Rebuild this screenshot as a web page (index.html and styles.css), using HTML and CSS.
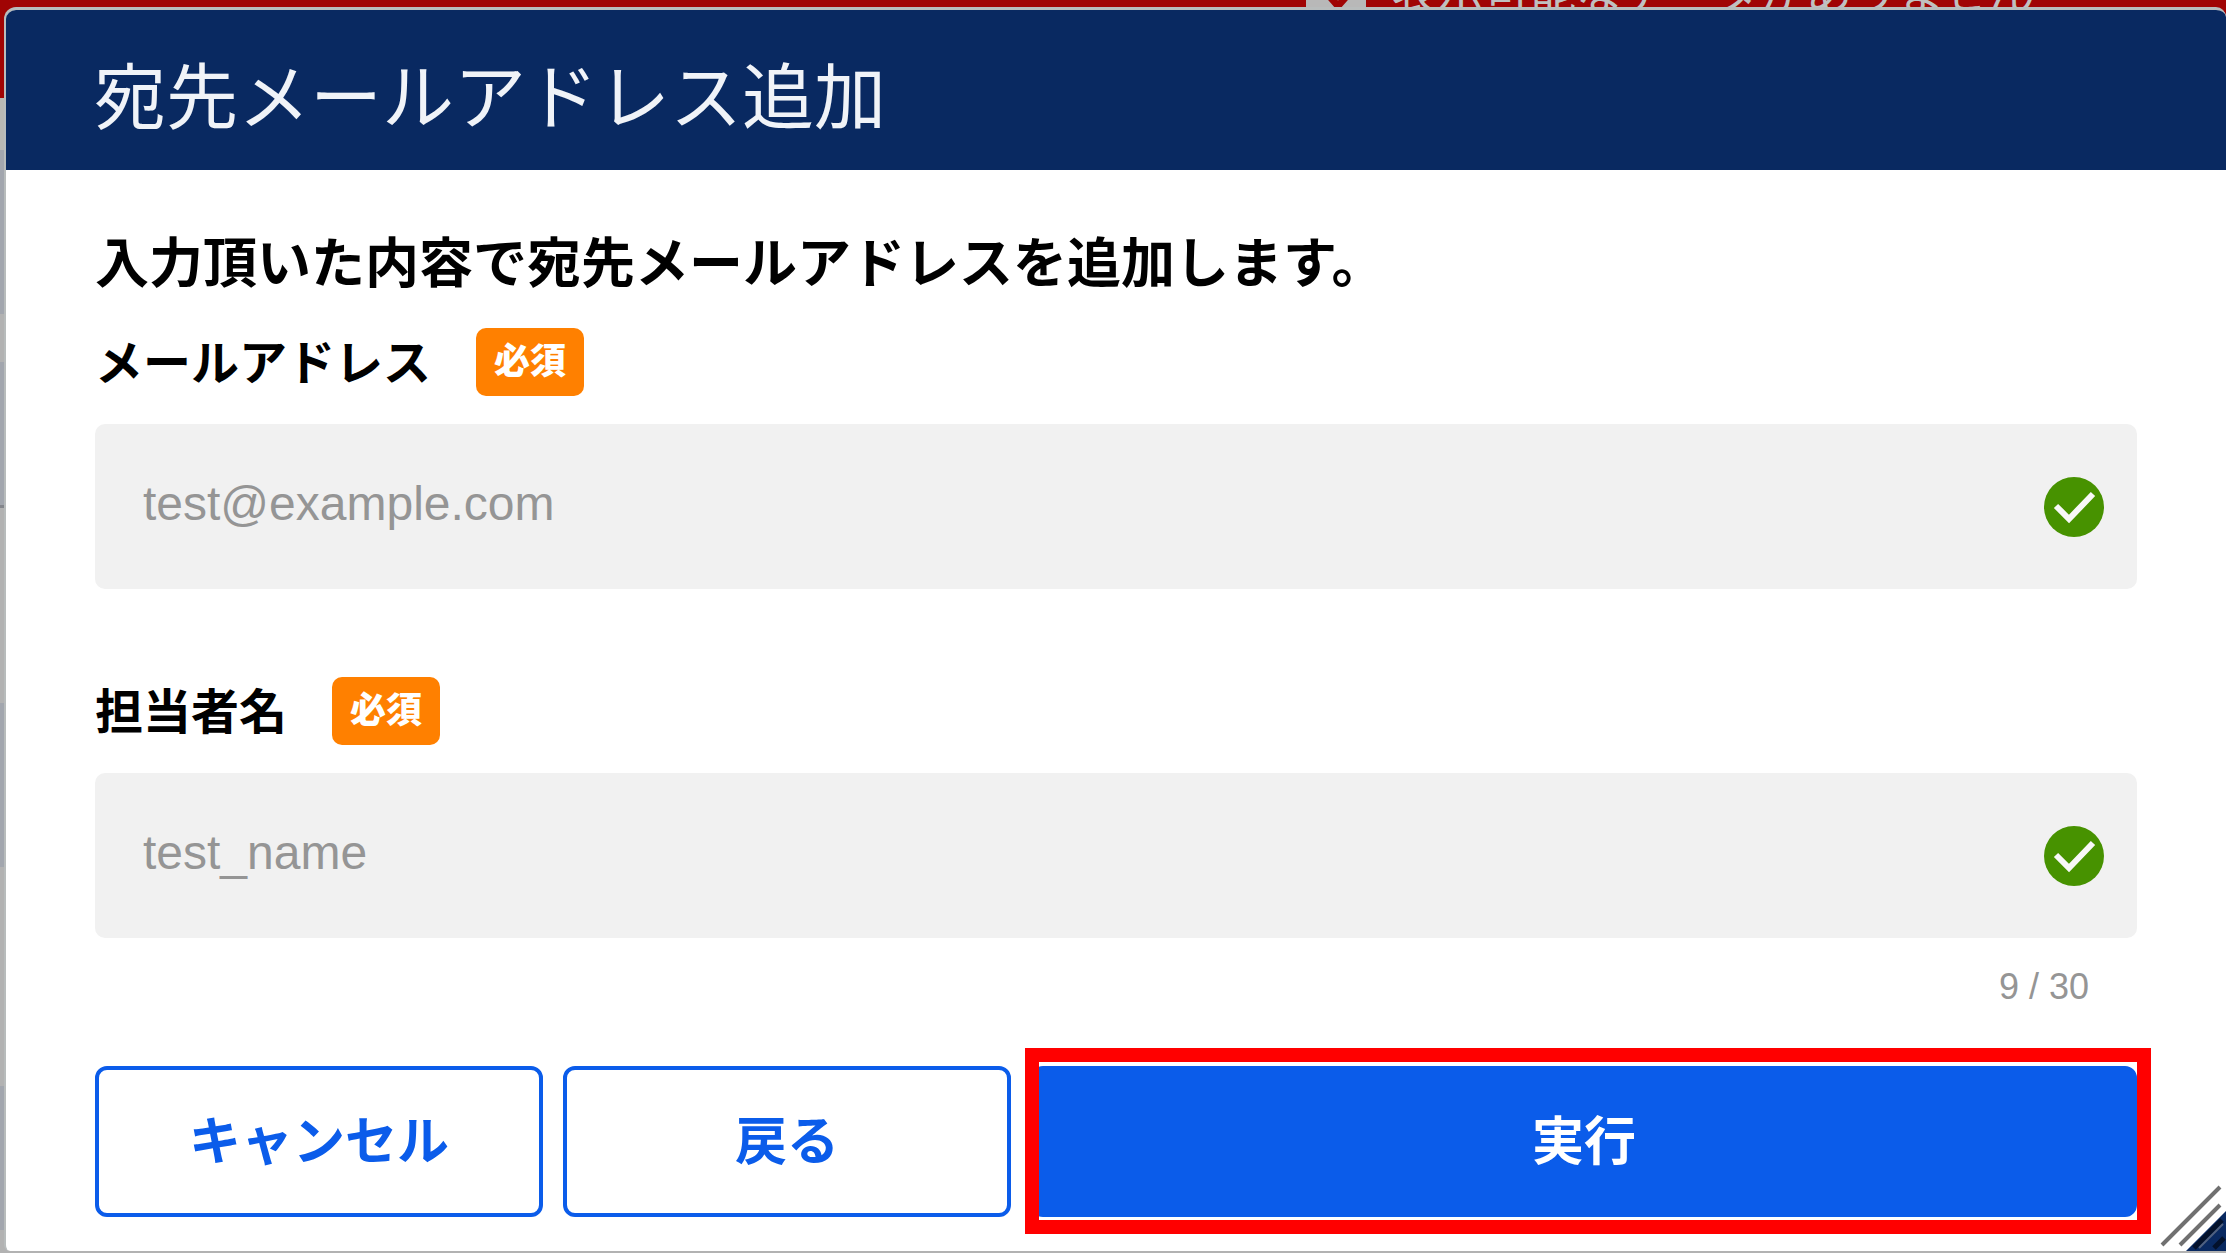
FILE: index.html
```html
<!DOCTYPE html>
<html lang="ja">
<head>
<meta charset="utf-8">
<title>宛先メールアドレス追加</title>
<link rel="stylesheet" href="styles.css">
</head>
<body>
<div class="backdrop">
  <div class="notice">
    <svg class="notice-icon" viewBox="0 0 60 46" aria-hidden="true"><rect width="60" height="46" fill="#b8b8b8"/><path d="M18 20l14 16 14-16" fill="none" stroke="#a00404" stroke-width="7"/></svg>
    <span>表示可能なデータがありません</span>
  </div>
</div>
<main class="dialog" role="dialog" aria-labelledby="dialog-title">
  <header class="dialog-header">
    <h1 class="dialog-title" id="dialog-title">宛先メールアドレス追加</h1>
  </header>
  <form class="dialog-body">
    <p class="lead">入力頂いた内容で宛先メールアドレスを追加します。</p>
    <div class="field">
      <div class="field-head">
        <label class="label" for="email">メールアドレス</label>
        <span class="badge">必須</span>
      </div>
      <div class="control">
        <input class="input" id="email" type="text" value="test@example.com" readonly>
        <svg class="check" viewBox="0 0 60 60" aria-hidden="true"><circle cx="30" cy="30" r="30" fill="#479200"/><path d="M12 29l13 13 24-25" fill="none" stroke="#f8f8f8" stroke-width="6"/></svg>
      </div>
    </div>
    <div class="field">
      <div class="field-head">
        <label class="label" for="name">担当者名</label>
        <span class="badge">必須</span>
      </div>
      <div class="control">
        <input class="input" id="name" type="text" value="test_name" readonly>
        <svg class="check" viewBox="0 0 60 60" aria-hidden="true"><circle cx="30" cy="30" r="30" fill="#479200"/><path d="M12 29l13 13 24-25" fill="none" stroke="#f8f8f8" stroke-width="6"/></svg>
      </div>
      <div class="counter">9 / 30</div>
    </div>
    <div class="actions">
      <button class="button" type="button">キャンセル</button>
      <button class="button" type="button">戻る</button>
      <div class="highlighted">
        <button class="button button-primary" type="submit">実行</button>
      </div>
    </div>
  </form>
  <svg class="resize-handle" viewBox="0 0 66 66" aria-hidden="true">
    <path d="M66 26v40H26z" fill="#092961"/>
    <path d="M2 60L60 2M20 60L60 20" stroke="#707070" stroke-width="4"/>
    <path d="M34 63l28-28M54 63l10-10" stroke="#03112b" stroke-width="5"/>
    <path d="M39 63l24-24" stroke="#50617f" stroke-width="2"/>
  </svg>
</main>
</body>
</html>
```
FILE: styles.css
```css
* {
  box-sizing: border-box;
}

body {
  margin: 0;
  min-height: 100vh;
  padding: 7px 0 4px 4px;
  overflow: hidden;
  background: #b2b2b2;
  font-family: "Liberation Sans", "Noto Sans CJK JP", sans-serif;
  color: #000;
}

.backdrop {
  position: absolute;
  inset: 0;
  overflow: hidden;
  background: linear-gradient(
    #a00404 98px, #b8b8b4 98px 150px, #a2a6ae 150px 314px,
    #b2b2b2 314px 362px, #a2a6ae 362px 505px, #84868c 505px 508px,
    #b2b2b2 508px 703px, #a2a6ae 703px 867px, #b2b2b2 867px 1086px,
    #a2a6ae 1086px 1230px, #b2b2b2 1230px);
}

.notice {
  position: absolute;
  top: -30px;
  left: 1306px;
  display: flex;
  gap: 26px;
  font-size: 46px;
  line-height: 46px;
  color: #c0c0c0;
  white-space: nowrap;
}

.notice-icon {
  width: 60px;
  height: 46px;
}

.dialog {
  position: relative;
  border: solid #b8bcbc;
  border-width: 3px 0 0 2px;
  border-radius: 12px 10px 0 6px;
  overflow: hidden;
  background: #fff;
}

.dialog-header {
  padding: 48px 88px 32px;
  background: #092961;
}

.dialog-title {
  margin: 0;
  font-size: 72px;
  line-height: 80px;
  font-weight: 400;
  color: #f0f3f8;
}

.dialog-body {
  padding: 58px 89px 34px;
}

.lead {
  margin: 0 0 28px;
  font-size: 54px;
  line-height: 72px;
  font-weight: 700;
}

.field + .field {
  margin-top: 88px;
}

.field-head {
  display: flex;
  align-items: center;
  gap: 45px;
  margin-bottom: 28px;
}

.label {
  padding-top: 4px;
  font-size: 48px;
  line-height: 64px;
  font-weight: 700;
}

.badge {
  padding: 0 18px;
  border-radius: 10px;
  background: #ff8000;
  font-size: 36px;
  line-height: 68px;
  font-weight: 900;
  color: #fff;
}

.control {
  display: flex;
  align-items: center;
  height: 165px;
  padding: 0 33px 0 48px;
  border-radius: 10px;
  background: #f1f1f1;
}

.input {
  flex: 1;
  min-width: 0;
  padding: 0 0 6px;
  border: 0;
  outline: 0;
  background: transparent;
  font-family: inherit;
  font-size: 48px;
  color: #959595;
}

.check {
  width: 60px;
  height: 60px;
}

.counter {
  margin: 28px 48px 58px;
  font-size: 36px;
  line-height: 42px;
  text-align: right;
  color: #959595;
}

.actions {
  display: grid;
  grid-template-columns: 448px 448px 1fr;
  gap: 20px;
}

.button {
  width: 100%;
  height: 151px;
  padding: 0 0 8px;
  border: 4px solid #0b5cea;
  border-radius: 12px;
  background: #fff;
  font-family: inherit;
  font-size: 52px;
  font-weight: 700;
  color: #0b5cea;
}

.button-primary {
  background: #0b5cea;
  color: #fff;
}

.highlighted {
  position: relative;
}

.highlighted::after {
  content: "";
  position: absolute;
  inset: -18px -14px -17px -6px;
  border: 14px solid #f00;
}

.resize-handle {
  position: absolute;
  right: 0;
  bottom: 0;
  width: 66px;
  height: 66px;
}
```
